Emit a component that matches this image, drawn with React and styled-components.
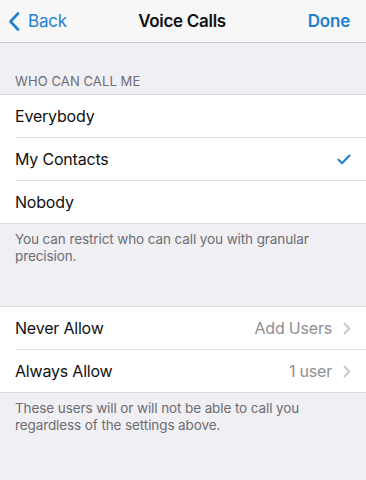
import styled, { createGlobalStyle } from "styled-components";

const Global = createGlobalStyle`
  html, body {
    margin: 0;
    padding: 0;
    background: #efeff4;
  }
  body {
    font-family: Inter, "Liberation Sans", sans-serif;
    -webkit-font-smoothing: antialiased;
  }
`;

const Screen = styled.div`
  width: 366px;
  min-height: 480px;
  background: #efeff4;
`;

const NavBar = styled.div`
  height: 42px;
  background: #f7f7f8;
  border-bottom: 1px solid #c9c9ce;
  display: grid;
  grid-template-columns: 1fr auto 1fr;
  align-items: center;
  padding: 0 16px 0 8px;
`;

const NavButton = styled.button`
  background: none;
  border: none;
  padding: 0;
  font-family: inherit;
  font-size: 17px;
  color: #1f7fcf;
  font-weight: ${(p) => (p.$bold ? 600 : 400)};
  display: flex;
  align-items: center;
  gap: 8px;
  justify-self: ${(p) => (p.$right ? "end" : "start")};
  letter-spacing: -0.2px;
`;

const NavTitle = styled.div`
  font-size: 17px;
  font-weight: 600;
  color: #111;
  letter-spacing: -0.3px;
  padding-left: 6px;
`;

const SectionHeader = styled.div`
  padding: 30px 15px 5px;
  font-size: 13px;
  color: #6d6d72;
  text-transform: uppercase;
  letter-spacing: 0.1px;
`;

const Group = styled.div`
  background: #fff;
  border-top: 1px solid #dadade;
  border-bottom: 1px solid #dadade;
  margin-top: ${(p) => p.$top || 0}px;
`;

const Row = styled.div`
  margin-left: 15px;
  padding-right: 15px;
  display: flex;
  align-items: center;
  justify-content: space-between;
  border-bottom: ${(p) => (p.$last ? "none" : "1px solid #e2e2e6")};
  box-sizing: border-box;
  height: ${(p) => (p.$last ? 42 : 43)}px;
`;

const Label = styled.span`
  font-size: 16px;
  color: #111;
  letter-spacing: -0.2px;
`;

const Value = styled.span`
  display: flex;
  align-items: center;
  gap: 11px;
  font-size: 16px;
  color: #8e8e93;
  letter-spacing: -0.2px;
`;

const Footer = styled.div`
  padding: 7px 15px 0;
  font-size: 13.5px;
  line-height: 17px;
  color: #6d6d72;
  letter-spacing: -0.1px;
`;

const BackChevron = () => (
  <svg width="12" height="19" viewBox="0 0 12 19">
    <path d="M10 1.5 L2.5 9.5 L10 17.5" fill="none" stroke="#1f7fcf" strokeWidth="2.6" strokeLinecap="round" strokeLinejoin="round" />
  </svg>
);

const Check = () => (
  <svg width="14" height="11" viewBox="0 0 14 11">
    <path d="M1.5 5.8 L5 9.2 L12.5 1.5" fill="none" stroke="#1f7fcf" strokeWidth="2" strokeLinecap="round" strokeLinejoin="round" />
  </svg>
);

const Chevron = () => (
  <svg width="8" height="13" viewBox="0 0 8 13">
    <path d="M1.5 1.5 L6.3 6.5 L1.5 11.5" fill="none" stroke="#c7c7cc" strokeWidth="2" strokeLinecap="round" strokeLinejoin="round" />
  </svg>
);

const options = ["Everybody", "My Contacts", "Nobody"];

export default function App() {
  const selected = "My Contacts";
  return (
    <Screen>
      <Global />
      <NavBar>
        <NavButton>
          <BackChevron />
          Back
        </NavButton>
        <NavTitle>Voice Calls</NavTitle>
        <NavButton $bold $right>Done</NavButton>
      </NavBar>

      <SectionHeader>Who can call me</SectionHeader>
      <Group>
        {options.map((o, i) => (
          <Row key={o} $last={i === options.length - 1}>
            <Label>{o}</Label>
            {o === selected && <Check />}
          </Row>
        ))}
      </Group>
      <Footer>
        You can restrict who can call you with granular
        <br />
        precision.
      </Footer>

      <Group $top={41}>
        <Row>
          <Label>Never Allow</Label>
          <Value>
            Add Users
            <Chevron />
          </Value>
        </Row>
        <Row $last>
          <Label>Always Allow</Label>
          <Value>
            1 user
            <Chevron />
          </Value>
        </Row>
      </Group>
      <Footer>
        These users will or will not be able to call you
        <br />
        regardless of the settings above.
      </Footer>
    </Screen>
  );
}
